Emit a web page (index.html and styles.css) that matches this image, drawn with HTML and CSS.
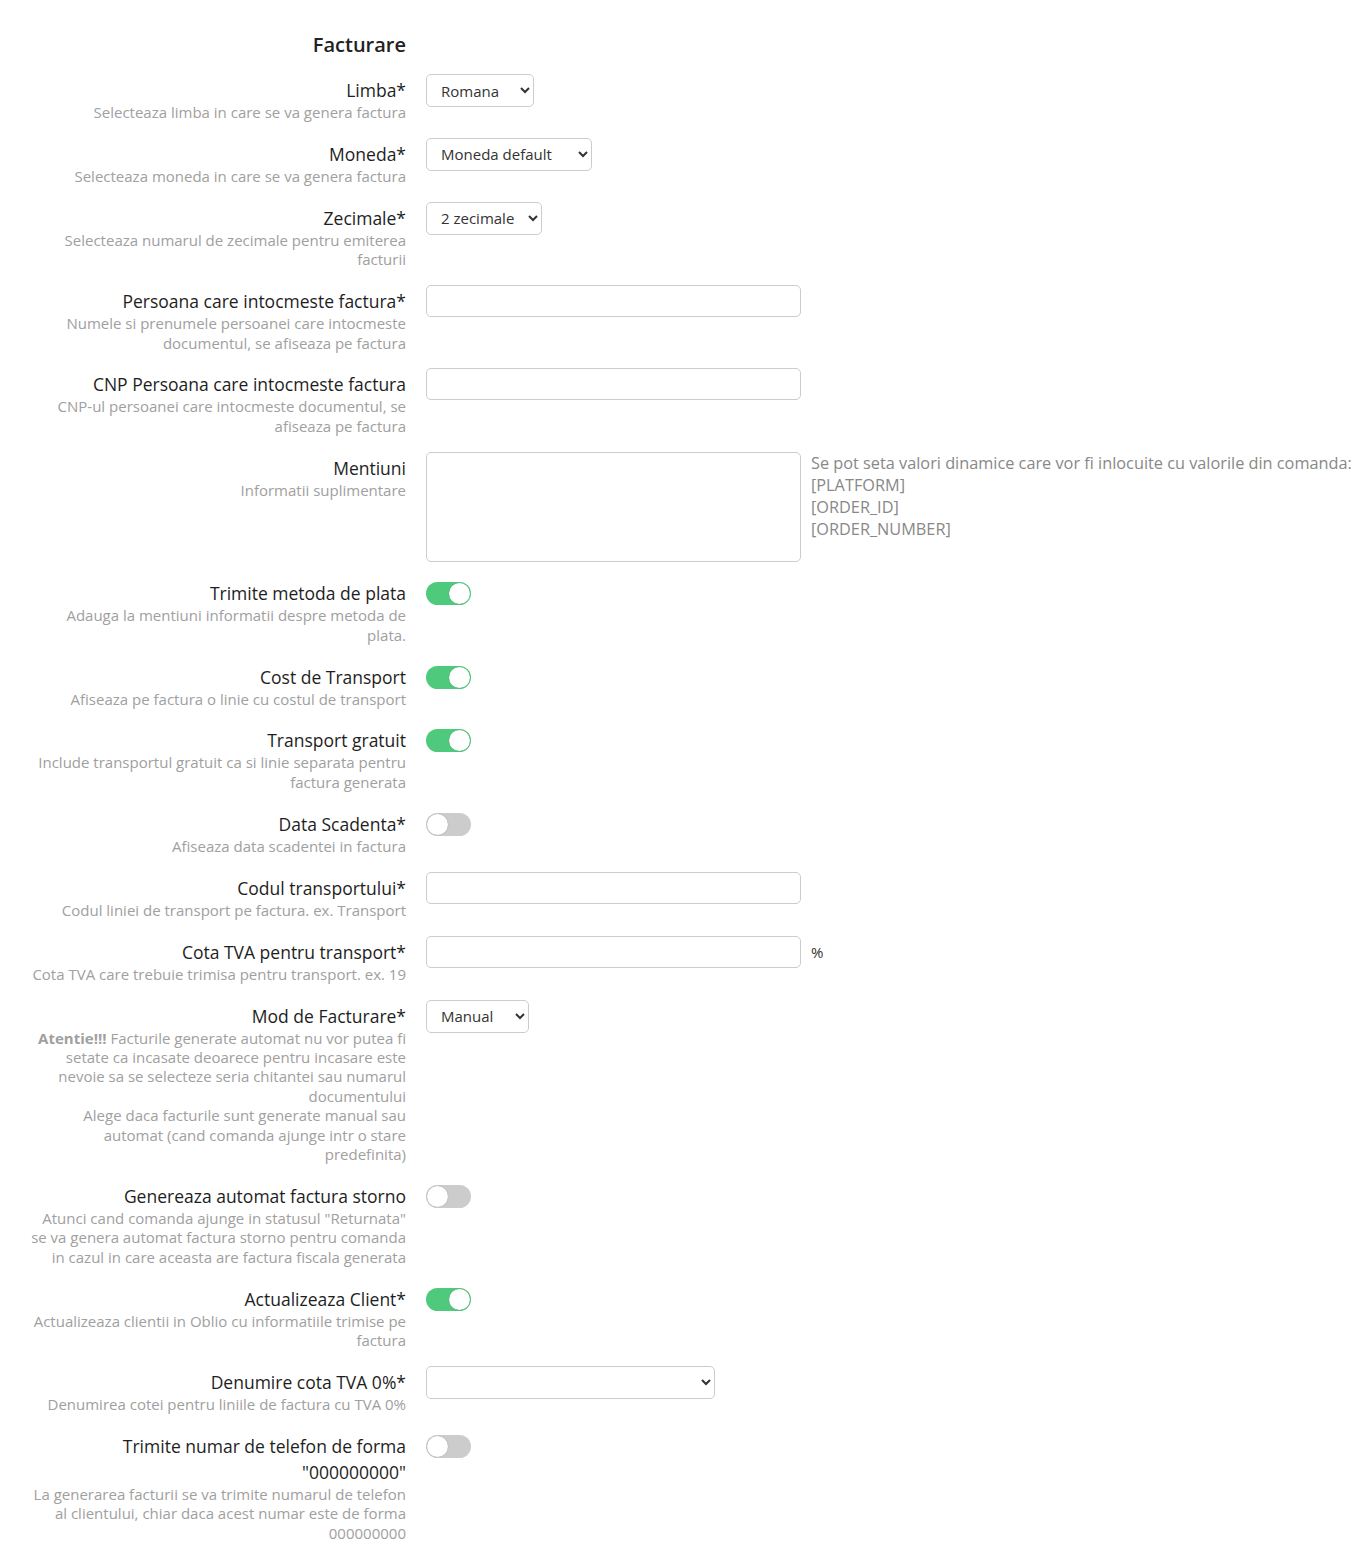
FILE: index.html
```html
<!DOCTYPE html>
<html lang="ro">
<head>
    <meta charset="UTF-8">
    <title>Setari facturare</title>
    <link rel="stylesheet" href="styles.css">
</head>
<body>
    <div class="settings">
        <div class="section-head">
            <h3>Facturare</h3>
        </div>

        <div class="field">
            <div class="field-label">
                <label>Limba*</label>
                <small>Selecteaza limba in care se va genera factura</small>
            </div>
            <div class="field-control">
                <select class="select select-lang">
                    <option>Romana</option>
                </select>
            </div>
        </div>

        <div class="field">
            <div class="field-label">
                <label>Moneda*</label>
                <small>Selecteaza moneda in care se va genera factura</small>
            </div>
            <div class="field-control">
                <select class="select select-currency">
                    <option>Moneda default</option>
                </select>
            </div>
        </div>

        <div class="field">
            <div class="field-label">
                <label>Zecimale*</label>
                <small>Selecteaza numarul de zecimale pentru emiterea facturii</small>
            </div>
            <div class="field-control">
                <select class="select select-decimals">
                    <option>2 zecimale</option>
                </select>
            </div>
        </div>

        <div class="field">
            <div class="field-label">
                <label>Persoana care intocmeste factura*</label>
                <small>Numele si prenumele persoanei care intocmeste documentul, se afiseaza pe factura</small>
            </div>
            <div class="field-control">
                <input class="input" type="text">
            </div>
        </div>

        <div class="field">
            <div class="field-label">
                <label>CNP Persoana care intocmeste factura</label>
                <small>CNP-ul persoanei care intocmeste documentul, se afiseaza pe factura</small>
            </div>
            <div class="field-control">
                <input class="input" type="text">
            </div>
        </div>

        <div class="field">
            <div class="field-label">
                <label>Mentiuni</label>
                <small>Informatii suplimentare</small>
            </div>
            <div class="field-control">
                <textarea class="input textarea"></textarea>
                <div class="field-hint">
                    Se pot seta valori dinamice care vor fi inlocuite cu valorile din comanda:<br>
                    [PLATFORM]<br>
                    [ORDER_ID]<br>
                    [ORDER_NUMBER]
                </div>
            </div>
        </div>

        <div class="field">
            <div class="field-label">
                <label>Trimite metoda de plata</label>
                <small>Adauga la mentiuni informatii despre metoda de plata.</small>
            </div>
            <div class="field-control">
                <label class="switch"><input type="checkbox" checked><span></span></label>
            </div>
        </div>

        <div class="field">
            <div class="field-label">
                <label>Cost de Transport</label>
                <small>Afiseaza pe factura o linie cu costul de transport</small>
            </div>
            <div class="field-control">
                <label class="switch"><input type="checkbox" checked><span></span></label>
            </div>
        </div>

        <div class="field">
            <div class="field-label">
                <label>Transport gratuit</label>
                <small>Include transportul gratuit ca si linie separata pentru factura generata</small>
            </div>
            <div class="field-control">
                <label class="switch"><input type="checkbox" checked><span></span></label>
            </div>
        </div>

        <div class="field">
            <div class="field-label">
                <label>Data Scadenta*</label>
                <small>Afiseaza data scadentei in factura</small>
            </div>
            <div class="field-control">
                <label class="switch"><input type="checkbox"><span></span></label>
            </div>
        </div>

        <div class="field">
            <div class="field-label">
                <label>Codul transportului*</label>
                <small>Codul liniei de transport pe factura. ex. Transport</small>
            </div>
            <div class="field-control">
                <input class="input" type="text">
            </div>
        </div>

        <div class="field">
            <div class="field-label">
                <label>Cota TVA pentru transport*</label>
                <small>Cota TVA care trebuie trimisa pentru transport. ex. 19</small>
            </div>
            <div class="field-control">
                <input class="input" type="text">
                <span class="unit">%</span>
            </div>
        </div>

        <div class="field">
            <div class="field-label">
                <label>Mod de Facturare*</label>
                <small><b>Atentie!!!</b> Facturile generate automat nu vor putea fi setate ca incasate deoarece pentru incasare este nevoie sa se selecteze seria chitantei sau numarul documentului</small>
                <small>Alege daca facturile sunt generate manual sau automat (cand comanda ajunge intr o stare predefinita)</small>
            </div>
            <div class="field-control">
                <select class="select select-mode">
                    <option>Manual</option>
                </select>
            </div>
        </div>

        <div class="field">
            <div class="field-label">
                <label>Genereaza automat factura storno</label>
                <small>Atunci cand comanda ajunge in statusul "Returnata" se va genera automat factura storno pentru comanda in cazul in care aceasta are factura fiscala generata</small>
            </div>
            <div class="field-control">
                <label class="switch"><input type="checkbox"><span></span></label>
            </div>
        </div>

        <div class="field">
            <div class="field-label">
                <label>Actualizeaza Client*</label>
                <small>Actualizeaza clientii in Oblio cu informatiile trimise pe factura</small>
            </div>
            <div class="field-control">
                <label class="switch"><input type="checkbox" checked><span></span></label>
            </div>
        </div>

        <div class="field">
            <div class="field-label">
                <label>Denumire cota TVA 0%*</label>
                <small>Denumirea cotei pentru liniile de factura cu TVA 0%</small>
            </div>
            <div class="field-control">
                <select class="select select-vat">
                    <option></option>
                </select>
            </div>
        </div>

        <div class="field">
            <div class="field-label">
                <label>Trimite numar de telefon de forma "000000000"</label>
                <small>La generarea facturii se va trimite numarul de telefon al clientului, chiar daca acest numar este de forma 000000000</small>
            </div>
            <div class="field-control">
                <label class="switch"><input type="checkbox"><span></span></label>
            </div>
        </div>
    </div>
</body>
</html>
```

FILE: styles.css
```css
body {
    margin: 0;
    background: #fff;
    color: #222;
    font-family: "Open Sans", "Liberation Sans", sans-serif;
}
.settings {
    padding: 33px 0 20px 26px;
}
.section-head {
    width: 380px;
    text-align: right;
    margin-bottom: 17px;
}
.section-head h3 {
    margin: 0;
    font-size: 20px;
    font-weight: 600;
    line-height: 24px;
}
.field {
    display: grid;
    grid-template-columns: 380px 1fr;
    column-gap: 20px;
    margin-bottom: 15.5px;
}
.field-label {
    text-align: right;
    padding-top: 3px;
}
.field-label label {
    display: block;
    font-size: 17.5px;
    line-height: 26px;
    color: #1e1e1e;
}
.field-label small {
    display: block;
    font-size: 15px;
    line-height: 19.4px;
    color: #a0a0a0;
}
.field-label small b {
    font-weight: 700;
}
.field-control {
    display: flex;
    align-items: flex-start;
}
.select {
    height: 33px;
    padding: 0 6px 0 10px;
    border: 1px solid #ccc;
    border-radius: 5px;
    background: #fff;
    color: #333;
    font-family: inherit;
    font-size: 15px;
}
.select-lang { width: 108px; }
.select-currency { width: 166px; }
.select-decimals { width: 116px; }
.select-mode { width: 103px; }
.select-vat { width: 289px; }
.input {
    box-sizing: border-box;
    width: 375px;
    height: 32px;
    padding: 4px 10px;
    border: 1px solid #ccc;
    border-radius: 5px;
    font-family: inherit;
    font-size: 15px;
}
.textarea {
    height: 110px;
    resize: none;
}
.field-hint {
    margin-left: 10px;
    font-size: 16.3px;
    line-height: 22px;
    color: #888;
}
.unit {
    margin-left: 10px;
    font-size: 15px;
    line-height: 32px;
    color: #333;
}
.switch {
    position: relative;
    display: block;
    width: 45px;
    height: 23px;
    margin-top: 5px;
}
.switch input {
    display: none;
}
.switch span {
    position: absolute;
    inset: 0;
    border-radius: 12px;
    background: #ccc;
}
/* knob */
.switch span::before {
    content: "";
    position: absolute;
    top: 1px;
    left: 1px;
    width: 21px;
    height: 21px;
    border-radius: 50%;
    background: #fff;
    box-shadow: 0 0 1px rgba(0, 0, 0, .35);
}
.switch input:checked + span {
    background: #4fca7d;
}
.switch input:checked + span::before {
    left: 23px;
}
```
